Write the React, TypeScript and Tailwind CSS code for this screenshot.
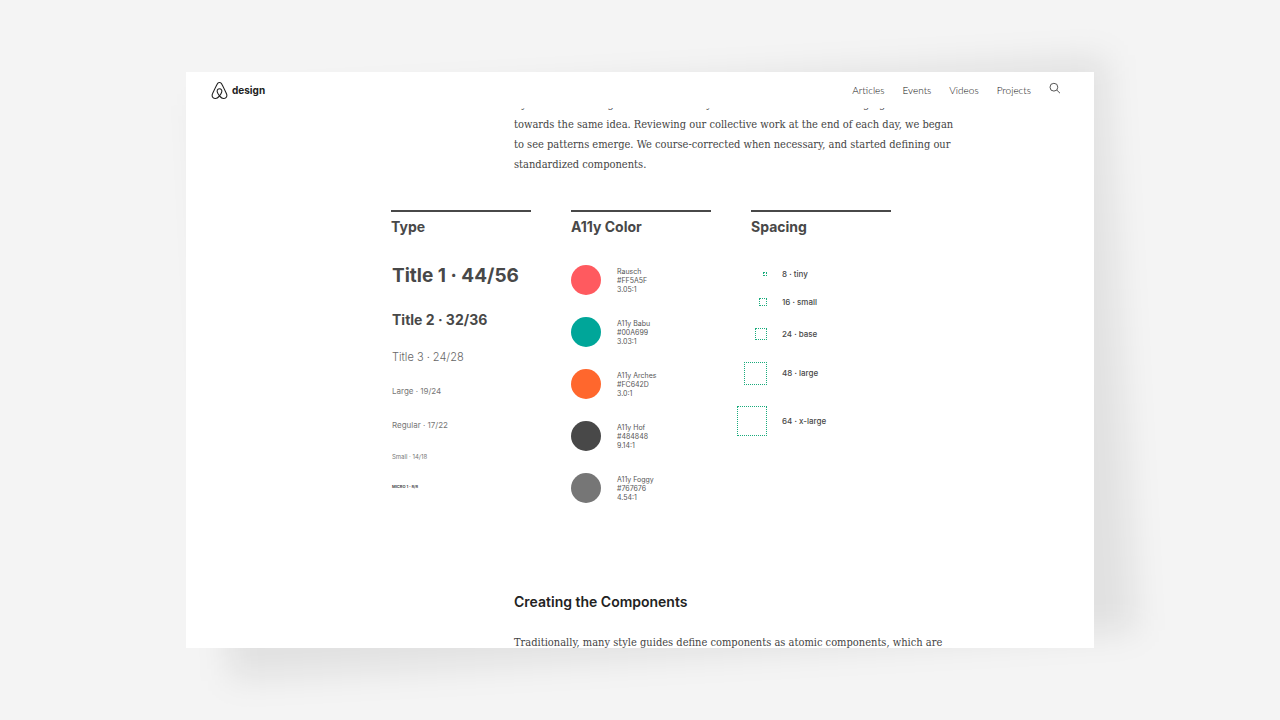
import { SiAirbnb } from 'react-icons/si';

const NAV_LINKS = ['Articles', 'Events', 'Videos', 'Projects'];

const TYPE_SCALE = [
  { label: 'Title 1 · 44/56', className: 'text-[19px] leading-[28px] font-bold text-[#484848]' },
  { label: 'Title 2 · 32/36', className: 'text-[14px] leading-[20px] font-bold text-[#484848]' },
  { label: 'Title 3 · 24/28', className: 'text-[11px] leading-[14px] font-light text-[#666]' },
  { label: 'Large · 19/24', className: 'text-[8px] leading-[14px] text-[#767676]' },
  { label: 'Regular · 17/22', className: 'text-[8px] leading-[14px] text-[#767676]' },
  { label: 'Small · 14/18', className: 'text-[6px] leading-[10px] text-[#767676]' },
  { label: 'MICRO 1 · 8/8', className: 'text-[4px] leading-[10px] font-bold text-[#484848]' },
];

const COLORS = [
  { name: 'Rausch', hex: '#FF5A5F', ratio: '3.05:1', swatch: 'bg-[#ff5a5f]' },
  { name: 'A11y Babu', hex: '#00A699', ratio: '3.03:1', swatch: 'bg-[#00a699]' },
  { name: 'A11y Arches', hex: '#FC642D', ratio: '3.0:1', swatch: 'bg-[#ff672d]' },
  { name: 'A11y Hof', hex: '#484848', ratio: '9.14:1', swatch: 'bg-[#484848]' },
  { name: 'A11y Foggy', hex: '#767676', ratio: '4.54:1', swatch: 'bg-[#767676]' },
];

const SPACING = [
  { label: '8 · tiny', row: 'h-4', box: 'size-1' },
  { label: '16 · small', row: 'h-5', box: 'size-2' },
  { label: '24 · base', row: 'h-6', box: 'size-3' },
  { label: '48 · large', row: 'h-[34px]', box: 'size-[23px]' },
  { label: '64 · x-large', row: 'h-[42px]', box: 'size-[30px]' },
];

function ColumnTitle({ children }: { children: string }) {
  return (
    <h3 className="border-t-2 border-[#484848] pt-[5px] text-[14px] leading-[20px] font-bold text-[#484848]">
      {children}
    </h3>
  );
}

function Header() {
  return (
    <header className="flex h-9 shrink-0 items-center justify-between pr-[33px] pl-[25px]">
      <a href="#" className="flex items-center gap-1 text-[10px] font-bold text-[#222]">
        <SiAirbnb className="size-[17px]" />
        design
      </a>
      <nav className="flex items-center gap-[18px] font-['Lato',sans-serif] text-[10px] font-light text-[#111]">
        {NAV_LINKS.map((link) => (
          <a key={link} href="#">
            {link}
          </a>
        ))}
        <button aria-label="Search" className="pb-1">
          <svg className="size-3" viewBox="0 0 12 12" fill="none" stroke="#444" strokeWidth="0.9">
            <circle cx="4.9" cy="5.2" r="3.9" />
            <path d="M7.8 8.1 11 11.2" />
          </svg>
        </button>
      </nav>
    </header>
  );
}

export default function App() {
  return (
    <div className="flex h-screen bg-[#f4f4f4] px-[186px] py-18 font-['Inter',sans-serif]">
      <div className="relative isolate flex min-w-0 flex-1">
        {/* Tilted drop shadow */}
        <div className="absolute inset-0 -z-10 translate-x-7 translate-y-2 -rotate-3 bg-black/8 blur-lg" />

        <div className="flex min-w-0 flex-1 flex-col bg-white">
          <Header />
          <article className="min-h-0 flex-1 overflow-hidden pr-[136px] pl-[205px]">
            <p className="-mt-[13px] ml-[123px] font-['DejaVu_Serif_Condensed','DejaVu_Serif',serif] text-[11px] leading-[20px] text-[#444]">
              By the first meeting we were all clearly one team and all of us converging
              <br />
              towards the same idea. Reviewing our collective work at the end of each day, we began
              <br />
              to see patterns emerge. We course-corrected when necessary, and started defining our
              <br />
              standardized components.
            </p>

            <section className="mt-[35px] grid max-w-[500px] grid-cols-3 gap-10">
              <div>
                <ColumnTitle>Type</ColumnTitle>
                <ul className="mt-[25px] flex flex-col gap-5 pl-px whitespace-nowrap">
                  {TYPE_SCALE.map((item) => (
                    <li key={item.label} className={item.className}>
                      {item.label}
                    </li>
                  ))}
                </ul>
              </div>

              <div>
                <ColumnTitle>A11y Color</ColumnTitle>
                <ul className="mt-7 flex flex-col gap-[22px]">
                  {COLORS.map((color) => (
                    <li key={color.name} className="flex h-[30px] items-center gap-4">
                      <span className={`size-[30px] rounded-full ${color.swatch}`} />
                      <p className="text-[7px] leading-[9px] text-[#555]">
                        {color.name}
                        <br />
                        {color.hex}
                        <br />
                        {color.ratio}
                      </p>
                    </li>
                  ))}
                </ul>
              </div>

              <div>
                <ColumnTitle>Spacing</ColumnTitle>
                <ul className="mt-[29px] -ml-4 flex flex-col gap-[10px]">
                  {SPACING.map((item) => (
                    <li key={item.label} className={`flex items-center gap-[15px] ${item.row}`}>
                      <span className="flex w-8 justify-end">
                        <span className={`border border-dotted border-[#1aab7c] ${item.box}`} />
                      </span>
                      <span className="text-[8px] leading-[12px] font-medium text-[#484848]">{item.label}</span>
                    </li>
                  ))}
                </ul>
              </div>
            </section>

            <h2 className="mt-[89px] ml-[123px] text-[14px] leading-[20px] font-semibold text-[#222]">
              Creating the Components
            </h2>
            <p className="mt-[21px] ml-[123px] font-['DejaVu_Serif_Condensed','DejaVu_Serif',serif] text-[11px] leading-[20px] text-[#444]">
              Traditionally, many style guides define components as atomic components, which are
            </p>
          </article>
        </div>
      </div>
    </div>
  );
}
